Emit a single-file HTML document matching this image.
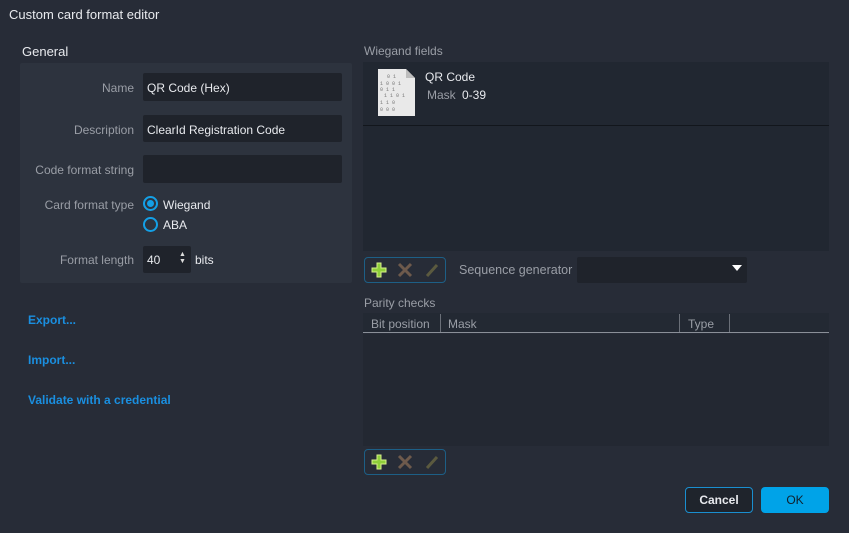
<!DOCTYPE html>
<html><head><meta charset="utf-8"><style>
*{box-sizing:border-box;margin:0;padding:0}
body{width:849px;height:533px;background:#272c37;font-family:"Liberation Sans",sans-serif;font-size:12px;color:#e8eaee;position:relative;overflow:hidden}
.a{position:absolute;white-space:nowrap}
.lbl{color:#9a9ea6;text-align:right;width:120px;left:14px}
.inp{position:absolute;background:#1f232b;border-radius:2px}
.lnk{color:#1a8fe0;font-weight:bold;font-size:12px;left:28px}
.tb{position:absolute;width:82px;height:26px;border:1px solid #1d5f86;border-radius:4px;left:364px}
.tb .pl{position:absolute;left:5px;top:3px;width:18px;height:18px}
.gray{color:#9a9ea6}
</style></head><body>
<div class="a" style="left:9px;top:7px;font-size:13px">Custom card format editor</div>
<div class="a" style="left:22px;top:44px;font-size:13px">General</div>
<div class="a" style="left:20px;top:63px;width:332px;height:220px;background:#2d333e;border-radius:2px"></div>
<div class="a lbl" style="top:81px">Name</div>
<div class="inp" style="left:143px;top:73px;width:199px;height:28px"></div>
<div class="a" style="left:147px;top:81px">QR Code (Hex)</div>
<div class="a lbl" style="top:123px">Description</div>
<div class="inp" style="left:143px;top:115px;width:199px;height:27px"></div>
<div class="a" style="left:147px;top:123px">ClearId Registration Code</div>
<div class="a lbl" style="top:163px">Code format string</div>
<div class="inp" style="left:143px;top:155px;width:199px;height:28px"></div>
<div class="a lbl" style="top:198px">Card format type</div>
<div class="a" style="left:143px;top:196px;width:15px;height:15px;border:2px solid #14a0e6;border-radius:50%"><div style="position:absolute;left:2px;top:2px;width:7px;height:7px;border-radius:50%;background:#14a0e6"></div></div>
<div class="a" style="left:163px;top:198px">Wiegand</div>
<div class="a" style="left:143px;top:217px;width:15px;height:15px;border:2px solid #14a0e6;border-radius:50%"></div>
<div class="a" style="left:163px;top:218px">ABA</div>
<div class="a lbl" style="top:253px">Format length</div>
<div class="inp" style="left:143px;top:246px;width:48px;height:27px"></div>
<div class="a" style="left:147px;top:253px">40</div>
<div class="a" style="left:179px;top:251px;font-size:7px;line-height:7px;color:#ddd">▲<br>▼</div>
<div class="a" style="left:195px;top:253px">bits</div>
<div class="a lnk" style="top:313px">Export...</div>
<div class="a lnk" style="top:353px">Import...</div>
<div class="a lnk" style="top:393px">Validate with a credential</div>

<div class="a gray" style="left:364px;top:44px">Wiegand fields</div>
<div class="a" style="left:363px;top:62px;width:466px;height:189px;background:#212731"></div>
<div class="a" style="left:363px;top:125px;width:466px;height:1px;background:#12161c"></div>
<svg class="a" style="left:378px;top:69px" width="38" height="47" viewBox="0 0 38 47"><path d="M0 0H28L37 9V47H0Z" fill="#e9e9e9"/><path d="M28 0V9H37" fill="#bdbdbd"/><g font-size="5" fill="#777" font-family="Liberation Mono"><text x="9" y="9">0 1</text><text x="2" y="16">1  0 0 1</text><text x="2" y="22">0  1 1</text><text x="6" y="28">1 1 0 1</text><text x="2" y="35">1 1    0</text><text x="2" y="42">0 0 0</text></g></svg>
<div class="a" style="left:425px;top:70px">QR Code</div>
<div class="a gray" style="left:427px;top:88px">Mask</div>
<div class="a" style="left:462px;top:88px">0-39</div>

<div class="tb" style="top:257px"><svg class="pl" viewBox="0 0 18 18"><path d="M7 2h4v5h5v4h-5v5H7v-5H2V7h5z" fill="#8fcf3a" stroke="#d7f08a" stroke-width="1"/></svg><svg class="a" style="left:32px;top:4px" width="16" height="16"><path d="M2 2L14 14M14 2L2 14" stroke="#6e5a4c" stroke-width="3"/></svg><svg class="a" style="left:59px;top:4px" width="16" height="16"><path d="M3 14L13 3" stroke="#5b5a3f" stroke-width="3"/></svg></div>
<div class="a gray" style="left:459px;top:263px;font-size:12.5px">Sequence generator</div>
<div class="inp" style="left:577px;top:257px;width:170px;height:26px"></div>
<div class="a" style="left:732px;top:265px;width:0;height:0;border-left:5px solid transparent;border-right:5px solid transparent;border-top:6px solid #fff"></div>

<div class="a gray" style="left:364px;top:296px">Parity checks</div>
<div class="a" style="left:363px;top:313px;width:466px;height:20px;background:#232933;border-bottom:1px solid #8a8f98"></div>
<div class="a gray" style="left:371px;top:317px">Bit position</div>
<div class="a" style="left:440px;top:314px;width:1px;height:18px;background:#6a6f78"></div>
<div class="a gray" style="left:448px;top:317px">Mask</div>
<div class="a" style="left:679px;top:314px;width:1px;height:18px;background:#6a6f78"></div>
<div class="a gray" style="left:688px;top:317px">Type</div>
<div class="a" style="left:729px;top:314px;width:1px;height:18px;background:#6a6f78"></div>
<div class="a" style="left:363px;top:334px;width:466px;height:112px;background:#232832"></div>

<div class="tb" style="top:449px"><svg class="pl" viewBox="0 0 18 18"><path d="M7 2h4v5h5v4h-5v5H7v-5H2V7h5z" fill="#8fcf3a" stroke="#d7f08a" stroke-width="1"/></svg><svg class="a" style="left:32px;top:4px" width="16" height="16"><path d="M2 2L14 14M14 2L2 14" stroke="#6e5a4c" stroke-width="3"/></svg><svg class="a" style="left:59px;top:4px" width="16" height="16"><path d="M3 14L13 3" stroke="#5b5a3f" stroke-width="3"/></svg></div>

<div class="a" style="left:685px;top:487px;width:68px;height:26px;border:1px solid #1a8fd0;border-radius:4px;background:#1f242c;text-align:center;line-height:24px;font-weight:bold">Cancel</div>
<div class="a" style="left:761px;top:487px;width:68px;height:26px;border-radius:4px;background:#00a3e8;text-align:center;line-height:26px;color:#10202c">OK</div>
</body></html>
